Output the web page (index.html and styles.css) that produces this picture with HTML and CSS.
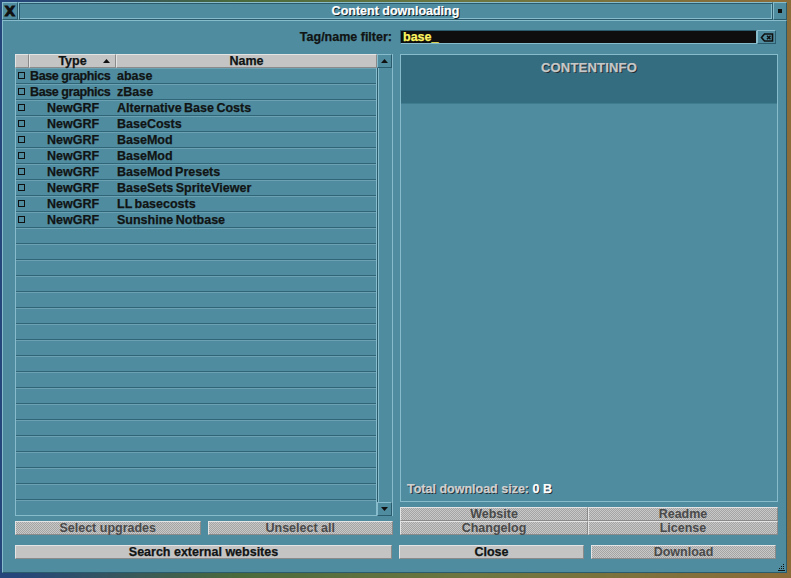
FILE: index.html
```html
<!DOCTYPE html>
<html>
<head>
<meta charset="utf-8">
<link rel="stylesheet" href="styles.css">
</head>
<body>
<div class="window">
  <div class="titlebar">
    <div class="tb-close">X</div>
    <div class="tb-caption">Content downloading</div>
    <div class="tb-sticky"><span></span></div>
  </div>
  <div class="wbody">
    <div class="filter-row">
      <span class="filter-label">Tag/name filter:</span>
      <div class="editbox"><span class="edit-text">base_</span></div>
      <div class="clear-btn">
        <svg width="14" height="9" viewBox="0 0 14 9"><path d="M1.5 4.5 L4.5 1 H12.5 V8 H4.5 Z" fill="none" stroke="#101010" stroke-width="1.6"/><path d="M7 2.8 L10.5 6.2 M10.5 2.8 L7 6.2" stroke="#101010" stroke-width="1.6"/></svg>
      </div>
    </div>
    <div class="main">
      <div class="col">
        <div class="list">
          <div class="list-table">
            <div class="hdr">
              <div class="h h-check"></div>
              <div class="h h-type">Type<svg class="sort" width="7" height="4" viewBox="0 0 7 4"><path d="M0 4 L3.5 0 L7 4 Z" fill="#101010"/></svg></div>
              <div class="h h-name">Name</div>
            </div>
            <div class="rows">
              <div class="row"><span class="cb"></span><span class="c-type left">Base graphics</span><span class="c-name">abase</span></div>
              <div class="row"><span class="cb"></span><span class="c-type left">Base graphics</span><span class="c-name">zBase</span></div>
              <div class="row"><span class="cb"></span><span class="c-type">NewGRF</span><span class="c-name">Alternative Base Costs</span></div>
              <div class="row"><span class="cb"></span><span class="c-type">NewGRF</span><span class="c-name">BaseCosts</span></div>
              <div class="row"><span class="cb"></span><span class="c-type">NewGRF</span><span class="c-name">BaseMod</span></div>
              <div class="row"><span class="cb"></span><span class="c-type">NewGRF</span><span class="c-name">BaseMod</span></div>
              <div class="row"><span class="cb"></span><span class="c-type">NewGRF</span><span class="c-name">BaseMod Presets</span></div>
              <div class="row"><span class="cb"></span><span class="c-type">NewGRF</span><span class="c-name">BaseSets SpriteViewer</span></div>
              <div class="row"><span class="cb"></span><span class="c-type">NewGRF</span><span class="c-name">LL basecosts</span></div>
              <div class="row"><span class="cb"></span><span class="c-type">NewGRF</span><span class="c-name">Sunshine Notbase</span></div>
              <div class="row"></div><div class="row"></div><div class="row"></div><div class="row"></div><div class="row"></div><div class="row"></div>
              <div class="row"></div><div class="row"></div><div class="row"></div><div class="row"></div><div class="row"></div><div class="row"></div>
              <div class="row"></div><div class="row"></div><div class="row"></div><div class="row"></div><div class="row"></div><div class="row"></div>
            </div>
          </div>
          <div class="scrollbar">
            <div class="sb-btn"><svg width="7" height="4" viewBox="0 0 7 4"><path d="M0 4 L3.5 0 L7 4 Z" fill="#101010"/></svg></div>
            <div class="sb-trough"></div>
            <div class="sb-btn"><svg width="7" height="4" viewBox="0 0 7 4"><path d="M0 0 L3.5 4 L7 0 Z" fill="#101010"/></svg></div>
          </div>
        </div>
        <div class="btn-row">
          <div class="btn disabled">Select upgrades</div>
          <div class="btn disabled">Unselect all</div>
        </div>
      </div>
      <div class="col">
        <div class="info-panel">
          <div class="info-head">CONTENTINFO</div>
          <div class="info-body">
            <div class="total">Total download size: <span class="total-val">0 B</span></div>
          </div>
        </div>
        <div class="btn-grid">
          <div class="btn disabled">Website</div>
          <div class="btn disabled">Readme</div>
          <div class="btn disabled">Changelog</div>
          <div class="btn disabled">License</div>
        </div>
      </div>
    </div>
    <div class="bottom-row">
      <div class="btn">Search external websites</div>
      <div class="btn-pair">
        <div class="btn">Close</div>
        <div class="btn disabled">Download</div>
      </div>
    </div>
    <div class="resize">
      <svg width="7" height="7" viewBox="0 0 7 7"><g fill="#101010"><rect x="5" y="0" width="1" height="1"/><rect x="3" y="2" width="1" height="1"/><rect x="5" y="2" width="1" height="1"/><rect x="1" y="4" width="1" height="1"/><rect x="3" y="4" width="1" height="1"/><rect x="5" y="4" width="1" height="1"/><rect x="0" y="6" width="7" height="1"/></g></svg>
    </div>
  </div>
</div>
</body>
</html>
```

FILE: styles.css
```css
:root {
  --body: #508c9f;
  --hi: #86bccc;
  --lo: #2a5c6e;
  --deep: #346c80;
  --line: #2f6577;
  --grey: #c4c4c4;
  --grey-hi: #e4e4e4;
  --grey-lo: #8a8a8a;
  --ink: #101414;
}

* { box-sizing: border-box; }

body {
  margin: 0;
  width: 791px;
  height: 578px;
  overflow: hidden;
  background: linear-gradient(90deg, #24467a 0, #24467a 2%, #4a6a3c 30%, #6e7640 60%, #8c6c38 100%);
  font-family: "Liberation Sans", Arial, sans-serif;
  font-weight: bold;
  font-size: 12.5px;
  color: var(--ink);
  -webkit-text-stroke: 0.25px currentColor;
}

.window {
  margin: 2px 0 0 2px;
  width: 785px;
  height: 571px;
  display: flex;
  flex-direction: column;
  background: var(--body);
}

.titlebar {
  height: 18px;
  display: flex;
}

.tb-close, .tb-caption, .tb-sticky {
  background: var(--body);
  border: 1px solid;
  border-color: var(--hi) var(--lo) var(--lo) var(--hi);
}

.tb-close {
  width: 16px;
  display: flex;
  align-items: center;
  justify-content: center;
  font-family: "DejaVu Sans", sans-serif;
  font-size: 14px;
  color: #101010;
  -webkit-text-stroke: 0.8px #101010;
}

.tb-caption {
  flex: 1;
  display: flex;
  align-items: center;
  justify-content: center;
  color: #ffffff;
  font-size: 12.5px;
  text-shadow: 1px 1px 0 #0c1c24;
  -webkit-text-stroke: 0.2px #ffffff;
  box-shadow: inset 1px 1px 0 var(--lo), inset -1px -1px 0 var(--hi);
}

.tb-sticky {
  width: 14px;
  display: flex;
  align-items: center;
  justify-content: center;
}
.tb-sticky span {
  width: 4px;
  height: 4px;
  background: #101010;
}

.wbody {
  position: relative;
  flex: 1;
  display: flex;
  flex-direction: column;
  padding: 9px 10px 0 12px;
  border: 1px solid;
  border-color: var(--hi) var(--lo) var(--lo) var(--hi);
}

.filter-row {
  height: 14px;
  display: flex;
  align-items: center;
  margin-bottom: 10px;
}

.filter-label {
  width: 378px;
  text-align: right;
  padding-right: 1px;
}

.editbox {
  margin-left: 7px;
  flex: 1;
  height: 14px;
  background: #0e0e0e;
  border: 1px solid;
  border-color: var(--lo) var(--hi) var(--hi) var(--lo);
  display: flex;
  align-items: center;
  padding-left: 2px;
}
.edit-text {
  color: #fcf460;
  font-size: 12.5px;
}

.clear-btn {
  width: 19px;
  height: 14px;
  border: 1px solid;
  border-color: var(--hi) var(--lo) var(--lo) var(--hi);
  display: flex;
  align-items: center;
  justify-content: center;
}

.main {
  display: flex;
  gap: 7px;
}

.col {
  width: 378px;
  display: flex;
  flex-direction: column;
}

.list {
  height: 462px;
  display: flex;
}

.list-table {
  width: 362px;
  display: flex;
  flex-direction: column;
}

.hdr {
  height: 14px;
  display: flex;
}

.h {
  background: var(--grey);
  border: 1px solid;
  border-color: var(--grey-hi) var(--grey-lo) var(--grey-lo) var(--grey-hi);
  display: flex;
  align-items: center;
  justify-content: center;
  line-height: 12px;
}
.h-check { width: 14px; }
.h-type { width: 87px; position: relative; }
.h-name { flex: 1; }
.sort {
  position: absolute;
  right: 5px;
  top: 4px;
}

.rows {
  flex: 1;
  overflow: hidden;
  border-left: 1px solid var(--hi);
  border-right: 1px solid var(--hi);
  border-bottom: 1px solid var(--hi);
}

.row {
  height: 16px;
  display: flex;
  align-items: center;
  border-bottom: 1px solid var(--line);
  box-shadow: inset 0 1px 0 #6aa2b4;
}

.cb {
  width: 7px;
  height: 7px;
  border: 1px solid #101010;
  margin-left: 2px;
  margin-right: 5px;
}

.c-type {
  width: 86px;
  text-align: center;
  white-space: nowrap;
}
.c-type.left {
  text-align: left;
  letter-spacing: -0.4px;
}
.c-name {
  padding-left: 1px;
  white-space: nowrap;
  word-spacing: -1px;
}

.scrollbar {
  width: 16px;
  display: flex;
  flex-direction: column;
  border-right: 1px solid var(--hi);
}
.sb-btn {
  height: 14px;
  display: flex;
  align-items: center;
  justify-content: center;
  border: 1px solid;
  border-color: var(--hi) var(--lo) var(--lo) var(--hi);
}
.sb-trough {
  flex: 1;
  border-left: 1px solid var(--lo);
  box-shadow: inset 1px 0 0 var(--hi);
}

.btn {
  height: 14px;
  background: var(--grey);
  border: 1px solid;
  border-color: var(--grey-hi) var(--grey-lo) var(--grey-lo) var(--grey-hi);
  display: flex;
  align-items: center;
  justify-content: center;
  line-height: 12px;
  white-space: nowrap;
}
.btn.disabled {
  background: repeating-conic-gradient(#c8c8c8 0 25%, #a4a4a4 0 50%) 0 0 / 2px 2px;
  color: #4a4a4a;
  -webkit-text-stroke: 0;
}

.btn-row {
  margin-top: 5px;
  display: flex;
  gap: 7px;
}
.btn-row .btn { flex: 1; }

.info-panel {
  height: 448px;
  display: flex;
  flex-direction: column;
  border: 1px solid var(--hi);
}
.info-head {
  height: 49px;
  background: var(--deep);
  color: #c8c8c8;
  text-shadow: 1px 1px 0 #1c2a30;
  text-align: center;
  padding-top: 5px;
  font-size: 13px;
  letter-spacing: 0.2px;
  border-bottom: 1px solid #3f7c90;
}
.info-body {
  flex: 1;
  display: flex;
  flex-direction: column;
  justify-content: flex-end;
  padding: 0 0 5px 6px;
}
.total {
  color: #d0d0d0;
  text-shadow: 1px 1px 0 #1c2a30;
  font-size: 12.5px;
}
.total-val { color: #ffffff; }

.btn-grid {
  margin-top: 5px;
  display: grid;
  grid-template-columns: 188px 190px;
}

.bottom-row {
  margin-top: 10px;
  display: flex;
  gap: 7px;
}
.bottom-row > .btn { width: 378px; }
.btn-pair {
  width: 378px;
  display: flex;
  gap: 7px;
}
.btn-pair .btn { flex: 1; }

.resize {
  position: absolute;
  right: 1px;
  bottom: 1px;
  width: 7px;
  height: 7px;
  display: flex;
}
```
